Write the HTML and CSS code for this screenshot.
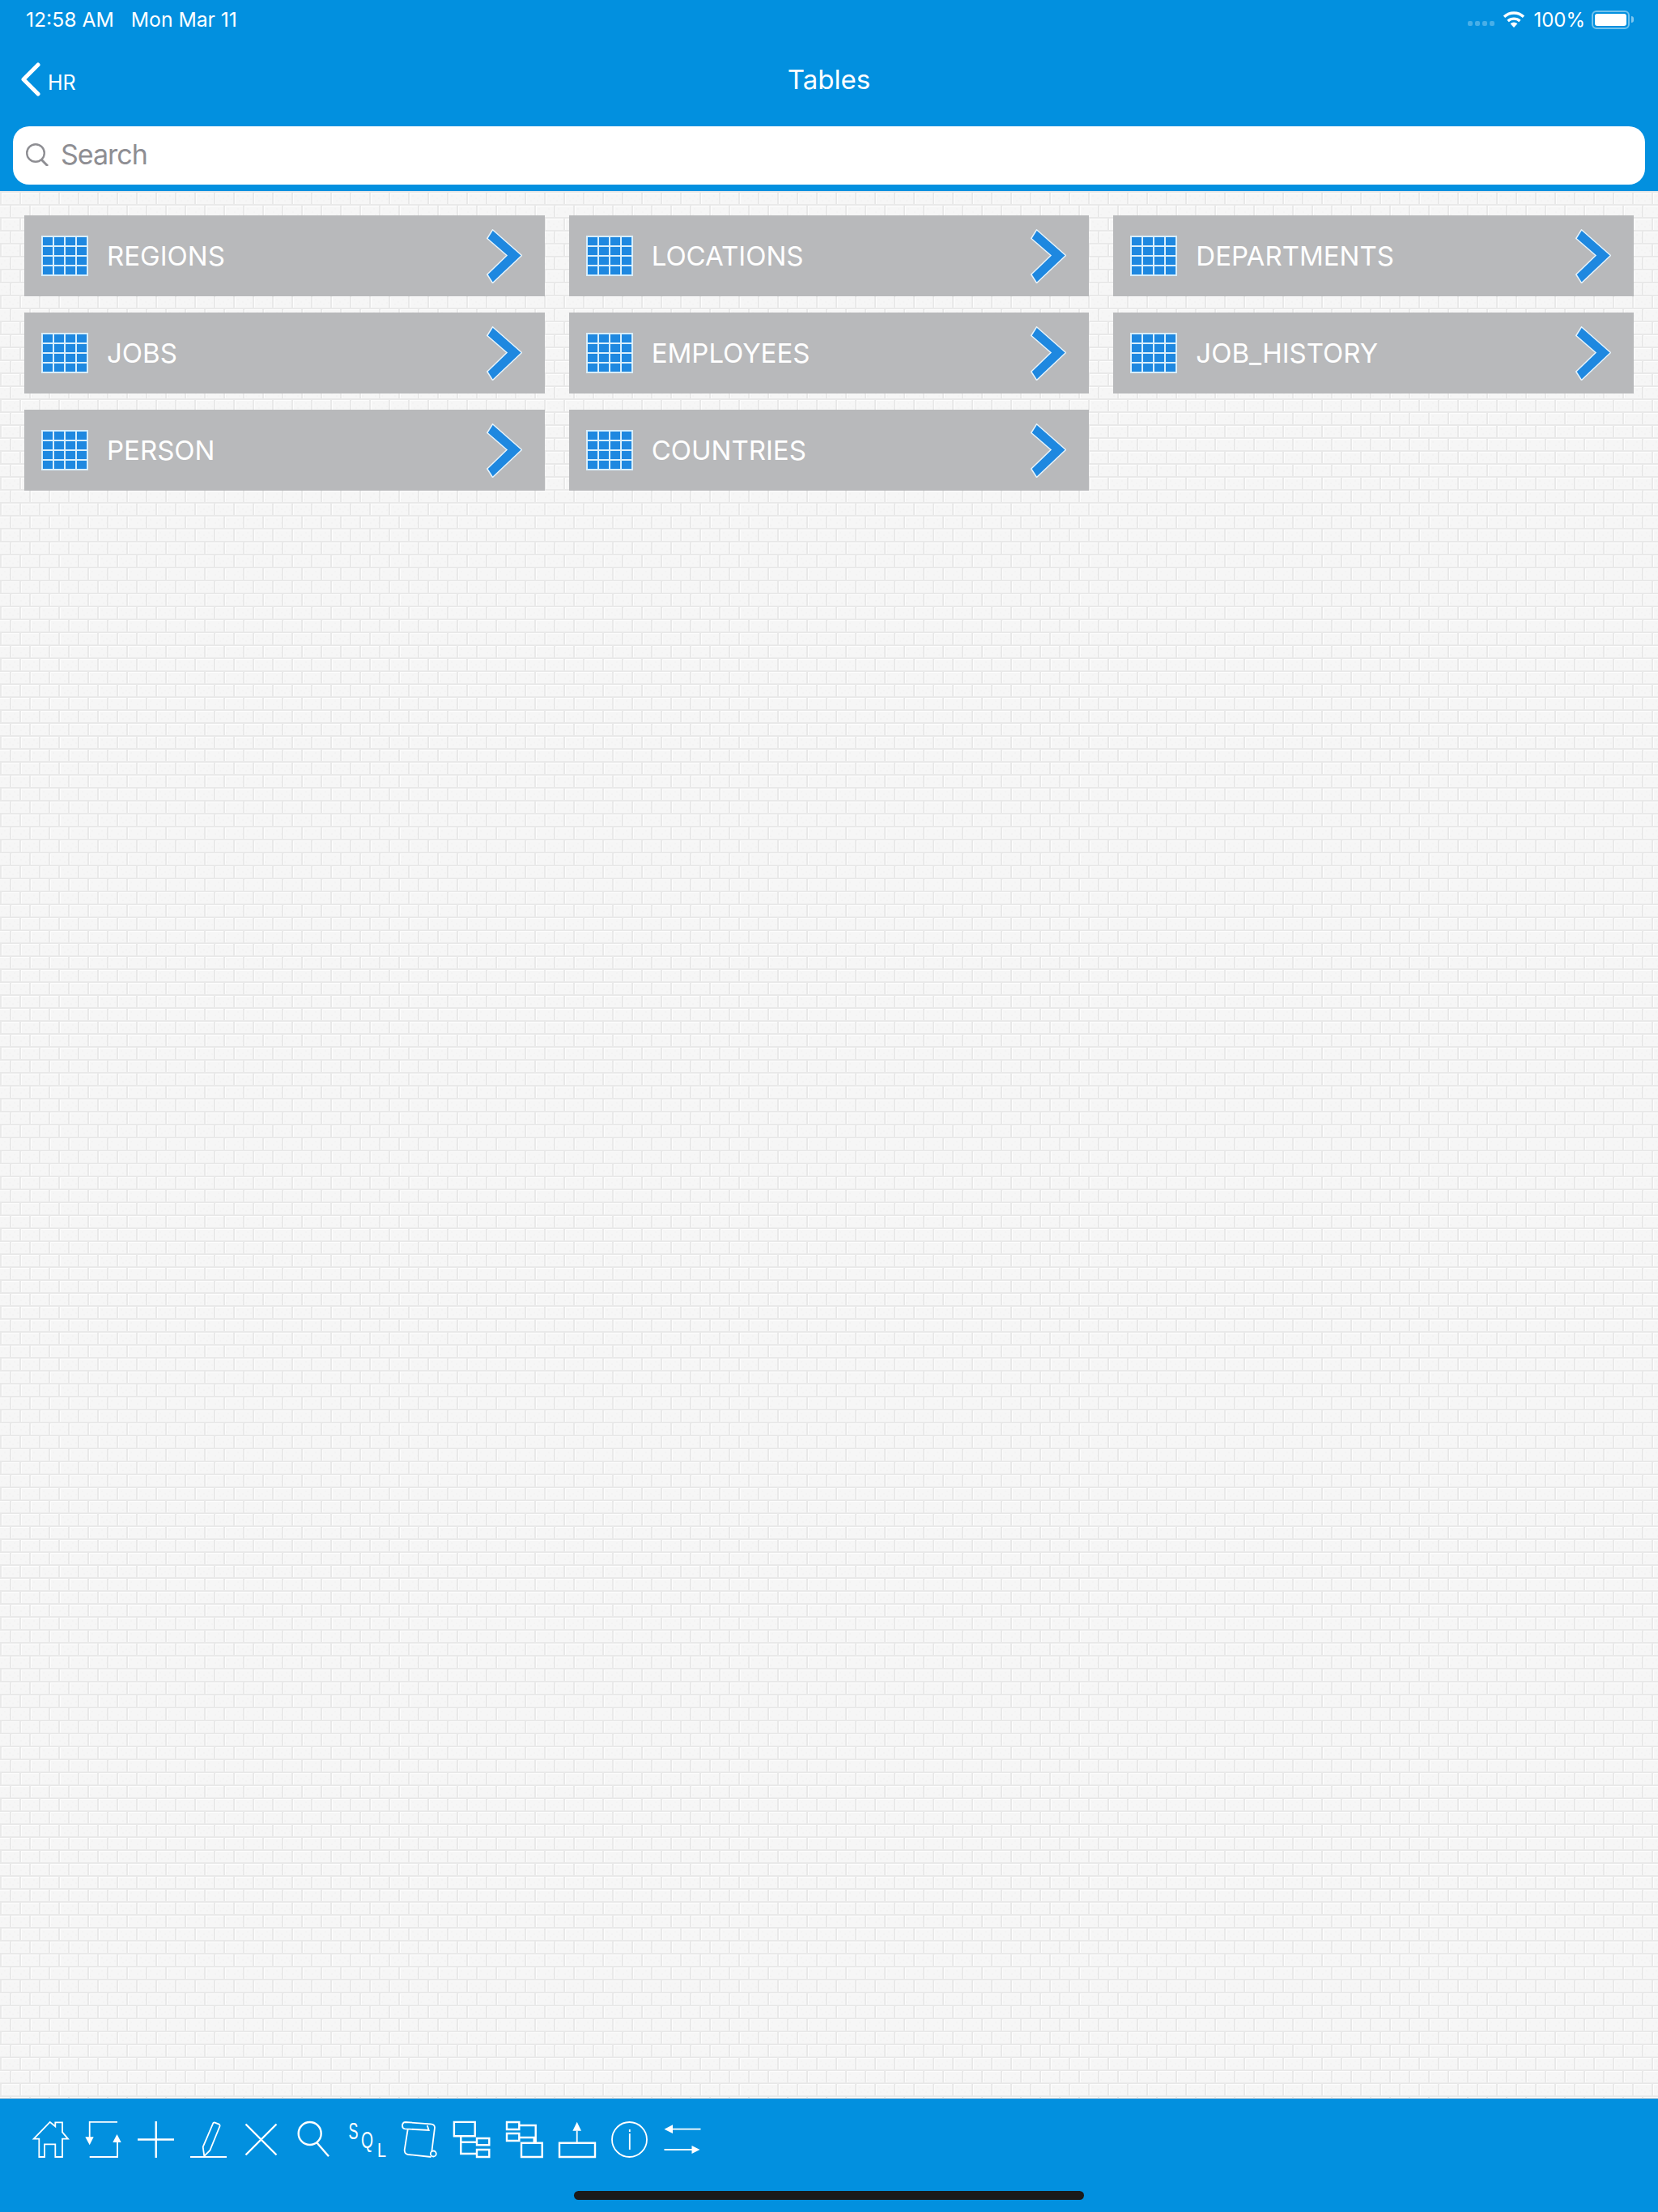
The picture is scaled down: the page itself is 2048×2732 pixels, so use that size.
FILE: index.html
```html
<!DOCTYPE html>
<html lang="en">
<head>
<meta charset="utf-8">
<title>Tables</title>
<link rel="stylesheet" href="styles.css">
</head>
<body>
<div class="app">
  <header class="top">
    <div class="status">
      <div class="status-left"><span>12:58 AM</span><span>Mon Mar 11</span></div>
      <div class="status-right">
        <div class="signal"><i></i><i></i><i></i><i></i></div>
        <svg class="wifi" viewBox="0 0 28 20"><path d="M14 20 9.600 15.200a6.400 6.400 0 0 1 8.800 0Z" fill="#fff"/><path d="M6.600 12a11 11 0 0 1 14.800 0M2 6.800A17.600 17.600 0 0 1 26 6.800" fill="none" stroke="#fff" stroke-width="3.400"/></svg>
        <span class="pct">100%</span>
        <div class="battery"><div class="battery-fill"></div></div>
        <div class="nub"></div>
      </div>
    </div>
    <nav class="nav">
      <div class="back">
        <svg class="back-icon" viewBox="0 0 26 42"><path d="M22 3 4 21l18 18" fill="none" stroke="#fff" stroke-width="5" stroke-linecap="round" stroke-linejoin="round"/></svg>
        <span>HR</span>
      </div>
      <h1 class="title">Tables</h1>
    </nav>
    <div class="search-wrap">
      <div class="search">
        <svg class="search-icon" viewBox="0 0 28 28"><circle cx="12" cy="12" r="10.800" fill="none" stroke="#8e8e93" stroke-width="2.400"/><path d="m19 20 8 8" fill="none" stroke="#8e8e93" stroke-width="3"/></svg>
        <span>Search</span>
      </div>
    </div>
  </header>

  <main class="content">
    <div class="grid">
      <a class="card"><svg class="tbl"><use href="#i-table"/></svg><span class="name">REGIONS</span><svg class="chev"><use href="#i-chev"/></svg></a>
      <a class="card"><svg class="tbl"><use href="#i-table"/></svg><span class="name">LOCATIONS</span><svg class="chev"><use href="#i-chev"/></svg></a>
      <a class="card"><svg class="tbl"><use href="#i-table"/></svg><span class="name">DEPARTMENTS</span><svg class="chev"><use href="#i-chev"/></svg></a>
      <a class="card"><svg class="tbl"><use href="#i-table"/></svg><span class="name">JOBS</span><svg class="chev"><use href="#i-chev"/></svg></a>
      <a class="card"><svg class="tbl"><use href="#i-table"/></svg><span class="name">EMPLOYEES</span><svg class="chev"><use href="#i-chev"/></svg></a>
      <a class="card"><svg class="tbl"><use href="#i-table"/></svg><span class="name">JOB_HISTORY</span><svg class="chev"><use href="#i-chev"/></svg></a>
      <a class="card"><svg class="tbl"><use href="#i-table"/></svg><span class="name">PERSON</span><svg class="chev"><use href="#i-chev"/></svg></a>
      <a class="card"><svg class="tbl"><use href="#i-table"/></svg><span class="name">COUNTRIES</span><svg class="chev"><use href="#i-chev"/></svg></a>
    </div>
  </main>

  <footer class="bar">
    <div class="tools">
      <svg class="tool" viewBox="0 0 45 45"><path class="s" d="M1.700 21.700 21.700.900l6.600 5.400V1.300H37v12l7 8.400h-7V44h-8.700V28.300H15V44H8.300V21.700Z"/></svg>
      <svg class="tool" viewBox="0 0 45 45"><path class="s" d="M40 .900H5.700V20M5.700 44H40V25"/><path class="f" d="M.300 19.300h10.400l-5 10zM34.300 26h10.400l-5.200-10z"/></svg>
      <svg class="tool" viewBox="0 0 45 45"><path class="s w" d="M0 22.500h45M22.700 0v45"/></svg>
      <svg class="tool" viewBox="0 0 45 45"><path class="s" d="M0 44h45M17.300 43 15.700 31.700 28.300 2.200q1-1 2.200-.6l5 2q1.400 1 1 2.400L24.300 36Z"/></svg>
      <svg class="tool" viewBox="0 0 45 45"><path class="s w" d="M3.500 41.500 41.500 3.500M3.500 3.500 41.500 41.500"/></svg>
      <svg class="tool" viewBox="0 0 45 45"><circle class="s w" cx="17.700" cy="15" r="14"/><path class="s w" d="M26.700 26.700 41 43.300"/></svg>
      <svg class="tool" viewBox="0 0 45 45"><text class="sql" x="0.500" y="22" textLength="12" lengthAdjust="spacingAndGlyphs">S</text><text class="sql" x="16" y="33" textLength="15" lengthAdjust="spacingAndGlyphs">Q</text><text class="sql sql-l" x="36" y="44" textLength="11" lengthAdjust="spacingAndGlyphs">L</text></svg>
      <svg class="tool" viewBox="0 0 45 45"><path class="s" d="M5.500 1 37 3.300q5 .4 5 4.400L38.300 37.500M8.700 10 4.700 35q-.4 5 4 6L37.500 44M5.300 9.300Q2 9 2 5.500 2 1.500 5.500 1M5.300 9.300 34.700 11 32.700 5"/><circle class="s" cx="40.300" cy="40" r="3.500"/></svg>
      <svg class="tool" viewBox="0 0 45 45"><path class="s w" d="M.900.900h25.800v17.400H.900zM29 21h15.300v8.300H29zM29 35h15.300v9H29zM9.300 18.300V40H29M9.300 25.700H29"/></svg>
      <svg class="tool" viewBox="0 0 45 45"><path class="s w" d="M1 1h15.300v9H1zM1 15h15.300v9H1zM19 26.700h25.700V44H19zM16.300 5h20.400v21.700M16.300 20h18.400v6.700"/></svg>
      <svg class="tool" viewBox="0 0 45 45"><path class="s w" d="M1 26.700h44V44H1z"/><path class="s" d="M22.700 11.700v15"/><path class="f" d="M17.400 11.700h10.600L22.700.700z"/></svg>
      <svg class="tool" viewBox="0 0 45 45"><circle class="s" cx="22.500" cy="22.500" r="21.500"/><path class="s" d="M22.800 15v20M22.800 10v3"/></svg>
      <svg class="tool" viewBox="0 0 45 45"><path class="s" d="M10.500 9.700h35M.500 35H35"/><path class="f" d="M.500 9.700 11 4.300V15zM44.500 35l-10-5v10z"/></svg>
    </div>
    <div class="home-indicator"></div>
  </footer>
</div>

<svg class="defs" width="0" height="0">
  <symbol id="i-table" viewBox="0 0 58 50">
    <rect width="58" height="50" fill="#d8eefb"/>
    <g fill="#1e88e0">
      <rect x="2" y="2" width="12" height="10"/><rect x="16" y="2" width="12" height="10"/><rect x="30" y="2" width="12" height="10"/><rect x="44" y="2" width="12" height="10"/>
      <rect x="2" y="14" width="12" height="10"/><rect x="16" y="14" width="12" height="10"/><rect x="30" y="14" width="12" height="10"/><rect x="44" y="14" width="12" height="10"/>
      <rect x="2" y="26" width="12" height="10"/><rect x="16" y="26" width="12" height="10"/><rect x="30" y="26" width="12" height="10"/><rect x="44" y="26" width="12" height="10"/>
      <rect x="2" y="38" width="12" height="10"/><rect x="16" y="38" width="12" height="10"/><rect x="30" y="38" width="12" height="10"/><rect x="44" y="38" width="12" height="10"/>
    </g>
  </symbol>
  <symbol id="i-chev" viewBox="0 0 44 67">
    <path d="M7.500.800 43.500 32.500 7.500 66.500.800 56 25 32.500.800 11.500Z" fill="#1e88e0" stroke="#e6f3fb" stroke-width="1.500"/>
  </symbol>
</svg>
</body>
</html>
```

FILE: styles.css
```css
* { box-sizing: border-box; }
html, body { margin: 0; padding: 0; }
body { font-family: Inter, Roboto, "Liberation Sans", sans-serif; color: #fff; }

.app { width: 2048px; height: 2732px; display: flex; flex-direction: column; overflow: hidden; }

.top { height: 236px; background: #0290df; display: flex; flex-direction: column; }

.status { height: 48px; padding: 0 30px 0 32px; display: flex; justify-content: space-between; align-items: center; font-size: 24px; }
.status-left { display: flex; gap: 21px; font-size: 24.700px; }
.status-right { display: flex; align-items: center; }
.signal { display: flex; gap: 3px; margin-right: 10px; align-self: flex-end; margin-bottom: 7px; }
.signal i { width: 6px; height: 6px; border-radius: 2px; background: rgba(255,255,255,.28); }
.wifi { width: 28px; height: 20px; margin-right: 10px; }
.pct { margin-right: 8px; }
.battery { width: 47px; height: 23px; border: 2px solid rgba(255,255,255,.45); border-radius: 6px; padding: 2px; }
.battery-fill { height: 100%; background: #fff; border-radius: 3px; }
.nub { width: 3px; height: 8px; margin-left: 2px; background: rgba(255,255,255,.5); border-radius: 0 3px 3px 0; }

.nav { height: 108px; position: relative; display: flex; align-items: center; justify-content: center; }
.back { position: absolute; left: 25px; top: 29px; display: flex; align-items: center; font-size: 25px; }
.back-icon { width: 26px; height: 42px; }
.back span { margin-left: 8px; margin-top: 8px; }
.title { margin: 0 0 8px; font-size: 33px; font-weight: 400; }

.search-wrap { padding: 0 16px; }
.search { height: 72px; background: #fff; border-radius: 20px; padding: 0 0 3px 16px; display: flex; align-items: center; color: #8e8e93; font-size: 34px; letter-spacing: -1px; }
.search-icon { width: 28px; height: 28px; margin-right: 15px; }

.content {
  flex: 1;
  padding: 30px;
  background-color: #f6f6f6;
  background-image: url("data:image/svg+xml,%3Csvg xmlns='http://www.w3.org/2000/svg' width='24' height='32' shape-rendering='crispEdges'%3E%3Crect width='24' height='32' fill='%23f6f6f6'/%3E%3Cpath fill='%23f3f3f3' d='M5 5h2v2H5zM11 8h2v2h-2zM17 5h2v2h-2zM7 11h2v2H7zM15 11h2v2h-2zM21 9h2v2h-2zM5 21h2v2H5zM11 25h2v2h-2zM17 21h2v2h-2zM7 28h2v2H7zM15 28h2v2h-2zM1 25h2v2H1z'/%3E%3Cpath fill='%23fdfdfd' d='M2 2h22v1H2zM2 2h1v14H2zM0 18h12v1H0zM14 18h10v1H14zM14 18h1v14h-1z'/%3E%3Cpath fill='%23e9e9e9' d='M0 0h24v2H0zM0 16h24v2H0zM0 2h2v14H0zM12 18h2v14h-2z'/%3E%3C/svg%3E");
  background-size: 24px 32px;
}
.grid { display: grid; grid-template-columns: repeat(3, 1fr); gap: 20px 30px; }
.card { height: 100px; background: #b8b9bb; display: flex; align-items: center; padding: 0 28px 0 21px; }
.tbl { width: 58px; height: 50px; flex: none; }
.name { flex: 1; margin-left: 23px; font-size: 33px; }
.chev { width: 44px; height: 67px; flex: none; }

.bar { height: 141px; flex: none; background: #0290df; border-top: 1px solid #d8d8d8; position: relative; }
.tools { display: flex; gap: 20px; padding: 28px 0 0 40px; }
.tool { width: 45px; height: 45px; flex: none; overflow: visible; }
.s { fill: none; stroke: #fff; stroke-width: 1.800; }
.w { stroke-width: 2.400; }
.f { fill: #fff; }
.sql { fill: #fff; font-family: "Liberation Sans", sans-serif; font-size: 30px; }
.sql-l { font-size: 24px; }
.home-indicator { position: absolute; left: 709px; top: 114px; width: 630px; height: 11px; border-radius: 6px; background: #1a1a1a; }

.defs { position: absolute; }
```
